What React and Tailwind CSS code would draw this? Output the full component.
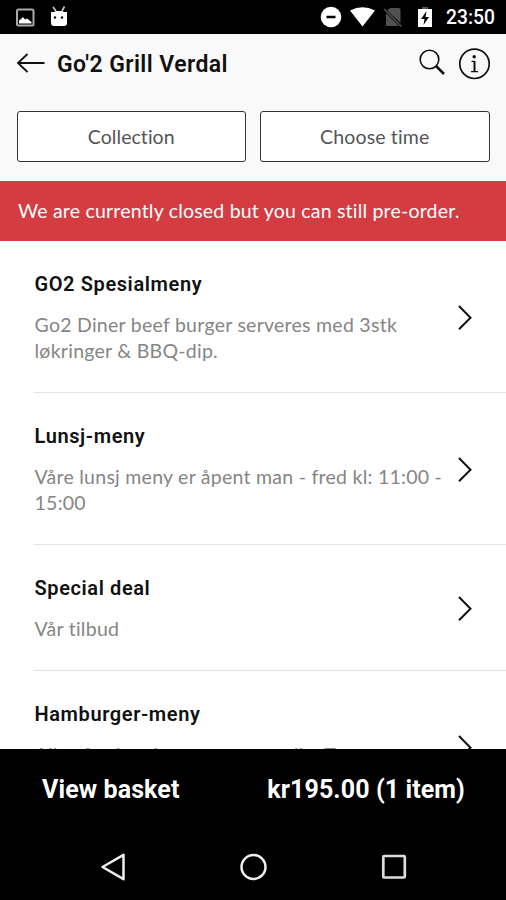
const categories = [
  { name: "GO2 Spesialmeny", lines: ["Go2 Diner beef burger serveres med 3stk", "løkringer & BBQ-dip."] },
  { name: "Lunsj-meny", lines: ["Våre lunsj meny er åpent man - fred kl: 11:00 -", "15:00"] },
  { name: "Special deal", lines: ["Vår tilbud"] },
  { name: "Hamburger-meny", lines: ["Alle våre hamburgere serves dip. Tomat"], tall: true },
];

function StatusBar() {
  return (
    <div className="flex h-[34px] shrink-0 items-center bg-black text-white">
      <svg className="ml-[16px]" width="19" height="19" viewBox="0 0 19 19">
        <rect x="1" y="1.5" width="16.5" height="16" rx="1.5" fill="none" stroke="#aaa" strokeWidth="2" />
        <path d="M3 15.500v-3l2-1.500 2-2 2 2.500 2-1 4.500 3.500v1.500z" fill="white" />
      </svg>
      <svg className="mb-[3px] ml-[15px]" width="18" height="22" viewBox="0 0 18 22">
        <path d="M3 2l3 4M14.500 1.500L12 6" stroke="#ccc" strokeWidth="1.600" />
        <path d="M1 7h3l2-1h6l2 1h3v11q0 3-3 3H4q-3 0-3-3z" fill="white" />
        <circle cx="5" cy="12.500" r="1.200" fill="black" />
        <circle cx="12" cy="12.500" r="1.200" fill="black" />
      </svg>
      <svg className="ml-auto" width="22" height="22" viewBox="0 0 22 22">
        <circle cx="11" cy="11" r="10.300" fill="white" />
        <path d="M6.500 11h9" stroke="black" strokeWidth="2.500" />
      </svg>
      <svg className="ml-[8px]" width="25" height="20" viewBox="0 0 25 20">
        <path d="M0 3.500q12.500-6.500 25 0L12.500 19.500z" fill="white" />
      </svg>
      <svg className="ml-[8px]" width="20" height="20" viewBox="0 0 20 20">
        <path d="M7 1h9q1.500 0 1.500 1.500V16L4 3.500zM3 6l13 13H3z" fill="#505050" />
        <path d="M1 2l17.500 17.500" stroke="#505050" strokeWidth="1.600" />
      </svg>
      <svg className="ml-[14px]" width="16" height="22" viewBox="0 0 16 22">
        <path d="M5 1h6v3H5z" fill="#555" />
        <path d="M1 3h14v18H1z" fill="white" />
        <path d="M9.500 5L4 13h3.500L6.500 19 12 11H8.500z" fill="black" />
      </svg>
      <span className="mt-[3px] mr-[11px] ml-[13px] text-[19.3px] font-medium">23:50</span>
    </div>
  );
}

function Header() {
  return (
    <header className="h-[147px] shrink-0 bg-[#f9f9f9]">
      <div className="flex h-[60px] items-center pr-[15px] pl-[16px]">
        <svg width="30" height="22" viewBox="0 0 30 22" fill="none" stroke="#111" strokeWidth="1.800">
          <path d="M11.500 1L2 10l9.500 9M2 10h26.500" />
        </svg>
        <h1 className="mt-[3px] ml-[11px] text-[23px] font-semibold tracking-[0.42px]">Go&apos;2 Grill Verdal</h1>
        <svg className="mb-[4px] ml-auto" width="28" height="28" viewBox="0 0 28 28" fill="none" stroke="#111">
          <circle cx="11.500" cy="11.500" r="9.300" strokeWidth="1.600" />
          <path d="M18 18l8 8" strokeWidth="2.500" />
        </svg>
        <svg className="ml-[13px]" width="32" height="32" viewBox="0 0 32 32" fill="none" stroke="#111">
          <circle cx="15.500" cy="15.800" r="14.700" strokeWidth="1.700" />
          <circle cx="15.200" cy="8.800" r="1.700" fill="#111" stroke="none" />
          <path d="M15.500 13v10.500" strokeWidth="2" />
          <path d="M12.500 13.300h3M12 23.700h7" strokeWidth="1.200" />
        </svg>
      </div>
      <div className="mt-[17px] flex gap-[14px] px-[16.5px] font-['Lato'] text-[19.5px] text-[#555]">
        <button className="h-[51px] flex-1 rounded-[3px] border border-[#333] bg-white tracking-[0.05px]">
          Collection
        </button>
        <button className="h-[51px] flex-1 rounded-[3px] border border-[#333] bg-white tracking-[0.15px]">
          Choose time
        </button>
      </div>
    </header>
  );
}

function Category({ name, lines, tall }) {
  return (
    <li className="ml-[34px] flex items-center border-b border-[#e2e2e2] pt-[29px] pr-[31px] pb-[28px]">
      <div className="flex-1 pl-[0.5px]">
        <h2 className="text-[20px] leading-[28px] font-semibold tracking-[0.6px]">{name}</h2>
        <div
          className={`mt-[14px] font-['Lato'] text-[19.5px] leading-[26px] tracking-[0.26px] whitespace-nowrap text-[#858585] ${tall ? "h-[52px]" : ""}`}
        >
          {lines.map((line) => (
            <p key={line}>{line}</p>
          ))}
        </div>
      </div>
      <svg className="shrink-0" width="18" height="26" viewBox="0 0 18 26" fill="none" stroke="#111">
        <path d="M2 2L13.500 13.700 2 25.200" strokeWidth="2" />
      </svg>
    </li>
  );
}

export default function App() {
  return (
    <div className="flex h-[900px] w-[506px] flex-col overflow-hidden bg-white font-['Roboto',sans-serif] text-[#111]">
      <StatusBar />
      <Header />
      <div className="h-[60px] shrink-0 bg-[#d53c42] pl-[18px] font-['Lato'] text-[19.5px] leading-[59px] tracking-[0.2px] text-white">
        We are currently closed but you can still pre-order.
      </div>
      <ul className="h-[508px] shrink-0 overflow-hidden">
        {categories.map((category) => (
          <Category key={category.name} {...category} />
        ))}
      </ul>
      <footer className="h-[151px] bg-black text-white">
        <div className="flex h-[82px] items-center justify-between pr-[41px] pl-[42px] text-[25px] font-bold tracking-[0.1px]">
          <span>View basket</span>
          <span>kr195.00 (1 item)</span>
        </div>
        <div className="mt-[22px] flex items-center justify-between pr-[98px] pl-[100px]">
          <svg width="28" height="28" viewBox="0 0 28 28" fill="none" stroke="#eee" strokeWidth="2.500">
            <path d="M2.500 14L23.500 1.800v24.400z" strokeLinejoin="round" />
          </svg>
          <svg width="28" height="28" viewBox="0 0 28 28" fill="none" stroke="#eee" strokeWidth="2.500">
            <circle cx="13.500" cy="14" r="12" />
          </svg>
          <svg width="28" height="28" viewBox="0 0 28 28" fill="none" stroke="#ddd" strokeWidth="2.700">
            <rect x="3.300" y="3" width="21.500" height="21.500" rx="1" />
          </svg>
        </div>
      </footer>
    </div>
  );
}
